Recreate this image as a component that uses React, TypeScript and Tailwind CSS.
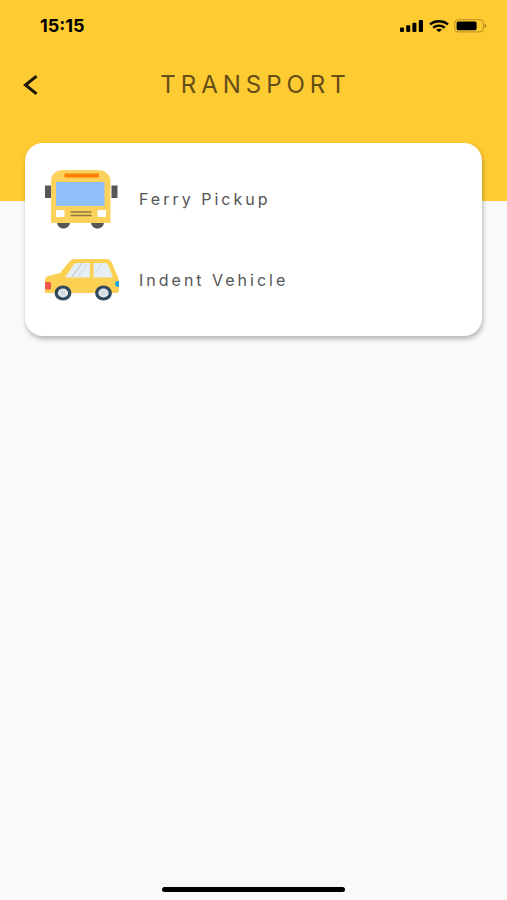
function SignalIcon() {
  return (
    <svg viewBox="0 0 24 12" className="h-3 w-6" aria-hidden="true">
      <rect x="0" y="7.5" width="4" height="4.5" rx="1" />
      <rect x="6.2" y="5.2" width="4" height="6.8" rx="1" />
      <rect x="12.4" y="2.8" width="4" height="9.2" rx="1" />
      <rect x="18.8" y="0" width="4.2" height="12" rx="1" />
    </svg>
  );
}

function WifiIcon() {
  return (
    <svg viewBox="0 0 20 12" className="h-3 w-5" aria-hidden="true">
      <g fill="none" stroke="currentColor" strokeWidth="2.4">
        <path d="M1 4.4C6 .2 14 .2 19 4.4" />
        <path d="M4.2 7.7c3.4-2.7 8.2-2.7 11.6 0" />
      </g>
      <path d="M7 9.8c1.8-1.3 4.2-1.3 6 0L10 12z" />
    </svg>
  );
}

function BatteryIcon() {
  return (
    <svg viewBox="0 0 33 14" className="h-3.5 w-[33px]" aria-hidden="true">
      <rect
        x="0.7"
        y="0.7"
        width="28.6"
        height="12.2"
        rx="3.4"
        fill="none"
        stroke="#b98f22"
        strokeWidth="1"
      />
      <rect x="2.6" y="2.4" width="20" height="8.8" rx="1.6" />
      <path d="M30.6 4.7c2.2.8 2.2 3.4 0 4.2z" fill="#a07c1c" />
    </svg>
  );
}

function BusIcon() {
  return (
    <svg viewBox="0 0 74 60" className="h-[60px] w-[74px]" aria-hidden="true">
      <path
        d="M12 53h13c0 4-3 6.500-6.500 6.500S12 57 12 53zM46 53h13c0 4-3 6.500-6.500 6.500S46 57 46 53z"
        fill="#575656"
      />
      <rect x="0" y="16.5" width="6" height="12.5" fill="#575656" />
      <rect x="66.500" y="16.5" width="6" height="12.5" fill="#575656" />
      <path d="M6 54V12C6 5 11 1 18 1h34.500c7 0 13 4 13 11v42z" fill="#fbd25c" />
      <rect x="19.5" y="4.5" width="34.5" height="4" fill="#ff7f00" />
      <rect x="11" y="13" width="48.5" height="24" fill="#8fc0fc" />
      <rect x="11" y="41" width="8.5" height="7" rx="0.8" fill="#fff" />
      <rect x="52.5" y="41" width="8.5" height="7" rx="0.8" fill="#fff" />
      <path d="M25.5 43h21M25.5 46.5h21" stroke="#8d7a3c" strokeWidth="1.4" />
    </svg>
  );
}

function CarIcon() {
  return (
    <svg viewBox="0 0 74 42" className="h-[42px] w-[74px]" aria-hidden="true">
      <path
        d="M0 33V21c0-2 1-3 3-4l12-3L24 3c1.5-2 3-3 5.5-3H61c3 0 4.5 1 5.5 3l5.5 13c1.2 2.5 2 5 2 8v7c0 2-1 3-3 3H0z"
        fill="#fcd053"
      />
      <path d="M20.5 17.5 29 5.500c.8-1 1.500-1.500 3-1.500h13v14.500H21c-1 0-1-.4-.5-1z" fill="#e5eef2" />
      <path d="M48.500 4H60c1.500 0 2.500.5 3 1.800l4.500 11c.3 1-.2 1.700-1.200 1.700H48.500z" fill="#e5eef2" />
      <path d="m27 18 10-14" stroke="#c5d1d6" strokeWidth="1.3" />
      <path d="M32.5 18 42 5M52 12l5-8" stroke="#d5e0e5" strokeWidth="1.3" />
      <path d="M0 23h4.500c1 0 1.500.6 1.500 1.500V29c0 .8-.5 1.500-1.500 1.500H0z" fill="#ed5648" />
      <path d="M74 22h-1.500c-1.500 0-2.500 1-2.500 2.800s1 3 2.500 3H74z" fill="#1ca6de" />
      <g fill="#dfe6ea" stroke="#30495d" strokeWidth="3.2">
        <ellipse cx="18" cy="34" rx="6.800" ry="6" />
        <ellipse cx="58.5" cy="34" rx="6.800" ry="6" />
      </g>
      <g fill="#cfd9df">
        <ellipse cx="18" cy="34" rx="2.5" ry="2.2" />
        <ellipse cx="58.5" cy="34" rx="2.5" ry="2.2" />
      </g>
    </svg>
  );
}

const menuItems = [
  { label: "Ferry Pickup", href: "#ferry-pickup", Icon: BusIcon },
  { label: "Indent Vehicle", href: "#indent-vehicle", Icon: CarIcon },
];

export default function App() {
  return (
    <div className="flex min-h-screen flex-col bg-[#f9f9f9] font-['Inter',sans-serif]">
      <header className="bg-[#ffcb32] pb-[99px] text-black">
        <div className="flex h-[52px] items-center justify-between pr-5 pl-10">
          <time className="text-lg font-bold">15:15</time>
          <div className="flex items-center gap-[5px]">
            <SignalIcon />
            <WifiIcon />
            <BatteryIcon />
          </div>
        </div>

        <div className="grid grid-cols-[40px_1fr_36px] items-center px-4 pt-4">
          <button type="button" aria-label="Back" className="flex h-[34px] items-center pl-[7px]">
            <svg viewBox="0 0 16 20" className="h-5 w-4" aria-hidden="true">
              <path d="M13.5 1.200 2.500 10l11 8.800" fill="none" stroke="#1d1705" strokeWidth="3" />
            </svg>
          </button>
          <h1 className="text-center text-2xl leading-8 tracking-[5px] text-[#644e17]">
            TRANSPORT
          </h1>
        </div>
      </header>

      <main className="-mt-[58px] flex-1 px-[25px]">
        <nav
          aria-label="Transport"
          className="rounded-[18px] bg-white px-5 pt-[26px] pb-[35px] shadow-[1px_3px_5px_rgba(0,0,0,0.28)]"
        >
          <ul className="flex flex-col gap-[30px]">
            {menuItems.map(({ label, href, Icon }) => (
              <li key={label}>
                <a href={href} className="flex items-center gap-5">
                  <Icon />
                  <span className="text-base leading-5 tracking-[3px] text-[#555]">{label}</span>
                </a>
              </li>
            ))}
          </ul>
        </nav>
      </main>

      <footer className="flex justify-center pb-2">
        <div className="h-[5px] w-[36%] rounded-full bg-black" />
      </footer>
    </div>
  );
}
